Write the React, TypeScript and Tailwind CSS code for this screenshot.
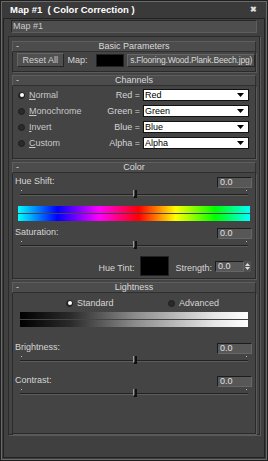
const font = "font-['Liberation_Sans',Arial,sans-serif]";

function Header({ title }: { title: string }) {
  return (
    <div className="h-[11px] shrink-0 flex items-center bg-[#4c4c4c] border border-t-[#5e5e5e] border-l-[#5e5e5e] border-b-[#2f2f2f] border-r-[#2f2f2f] text-[9px] leading-none text-[#dadada] relative">
      <span className="absolute left-[3px] top-[0px]">-</span>
      <span className="flex-1 text-center">{title}</span>
    </div>
  );
}

function Rollout({ title, children, h }: { title: string; children: React.ReactNode; h: string }) {
  return (
    <div className={`flex flex-col shrink-0 ${h}`}>
      <Header title={title} />
      <div className="flex-1 min-h-0 overflow-hidden border-l border-r border-b border-l-[#2a2a2a] border-r-[#2a2a2a] border-b-[#2a2a2a] shadow-[1px_1px_0_#5a5a5a]">{children}</div>
    </div>
  );
}

function Radio({ on, label }: { on?: boolean; label: React.ReactNode }) {
  return (
    <div className="flex items-center gap-[4px]">
      <div className="w-[7px] h-[7px] rounded-full bg-[#2a2a2a] border border-[#1e1e1e] flex items-center justify-center">
        {on && <div className="w-[4px] h-[4px] rounded-full bg-white" />}
      </div>
      <span>{label}</span>
    </div>
  );
}

function Drop({ value }: { value: string }) {
  return (
    <div className="w-[106px] h-[12px] bg-white border border-[#111] flex items-center text-black text-[9px] leading-none pl-[1px]">
      <span className="flex-1">{value}</span>
      <svg width="7" height="4" className="mr-[4px]"><polygon points="0,0 7,0 3.5,4" fill="#000" /></svg>
    </div>
  );
}

function Field({ w = "w-[35px]" }: { w?: string }) {
  return (
    <div className={`${w} h-[11px] bg-[#575757] border-t border-l border-t-[#1c1c1c] border-l-[#1c1c1c] border-b border-r border-b-[#666] border-r-[#666] text-[9px] leading-none text-[#e0e0e0] pl-[2px] flex items-center`}>
      0.0
    </div>
  );
}

function Slider() {
  return (
    <div className="relative h-[12px] mx-[6px]">
      <div className="absolute left-0 right-0 top-[6px] h-[2px] border-t border-t-[#222] border-b border-b-[#5c5c5c]" />
      <div className="absolute left-[1px] top-[2px] w-[1px] h-[1px] bg-[#bbb]" />
      <div className="absolute right-[1px] top-[2px] w-[1px] h-[1px] bg-[#bbb]" />
      <div className="absolute left-[113px] top-[2px] w-[4px] h-[8px] bg-[#4a4a4a] border-r-2 border-b-2 border-r-[#111] border-b-[#111] border-l border-l-[#9a9a9a]" />
    </div>
  );
}

function LabelField({ label }: { label: string }) {
  return (
    <div className="flex items-center justify-between pl-[1px] pr-[2px] h-[12px]">
      <span className="-mt-[1px]">{label}</span>
      <Field />
    </div>
  );
}

const spectrum = "bg-[linear-gradient(to_right,#00ffff,#0000ff_17%,#ff00ff_35%,#ff0000_52%,#ffff00_68%,#00ff00_85%,#00ffff)]";
const grays = "bg-[linear-gradient(to_right,#000,#2a2a2a_22%,#8a8a8a_50%,#e6e6e6_85%,#fff)]";

export default function App() {
  return (
    <div className={`w-[268px] h-[461px] bg-[#1f1f1f] p-[1px] ${font} text-[9px] text-[#d6d6d6] leading-none`}>
      <div className="h-full bg-[#3c3c3c] border border-[#6a6a6a] flex flex-col">
        <div className="h-[16px] shrink-0 flex items-center px-[8px] text-white font-bold text-[9.5px] bg-[#3a3a3a]">
          <span className="flex-1">Map #1&nbsp;&nbsp;( Color Correction )</span>
          <span className="text-[8px] text-[#ddd] mr-[1px]">✖</span>
        </div>
        <div className="flex-1 flex flex-col border border-[#222] mx-[1px] mb-[1px] bg-[#404040] px-[2px]">
          <div className="shrink-0 mt-[1px] mx-[5px] h-[13px] bg-[#4e4e4e] border border-t-[#262626] border-l-[#262626] border-b-[#5e5e5e] border-r-[#5e5e5e] text-[#c8c8c8] pl-[1px] flex items-center">
            Map #1
          </div>
          <div className="mt-[3px] h-[399px] shrink-0 mx-[2px] border border-[#2a2a2a] bg-[#444] px-[3px] pt-[4px] flex flex-col gap-[3px] shadow-[1px_1px_0_#5a5a5a]">
            <Rollout title="Basic Parameters" h="h-[31px]">
              <div className="flex items-center pt-[1px] pl-[4px] gap-[3px] whitespace-nowrap">
                <div className="w-[47px] h-[14px] bg-[#505050] border border-t-[#666] border-l-[#666] border-b-[#262626] border-r-[#262626] flex items-center justify-center text-[#cfcfcf]">Reset All</div>
                <span className="ml-[1px]">Map:</span>
                <div className="ml-[5px] w-[29px] h-[13px] bg-black border border-[#222]" />
                <div className="ml-[0px] w-[129px] h-[13px] bg-[#505050] border border-t-[#666] border-l-[#666] border-b-[#262626] border-r-[#262626] flex items-center justify-center text-[#d8d8d8] text-[8.5px] tracking-[-0.2px] overflow-hidden">s.Flooring.Wood.Plank.Beech.jpg)</div>
              </div>
            </Rollout>
            <Rollout title="Channels" h="h-[84px]">
              <div className="flex pt-[3px] pl-[5px]">
                <div className="flex flex-col gap-[4px] w-[80px] text-[#c8c8c8]">
                  <div className="h-[12px] flex items-center"><Radio on label={<><u>N</u>ormal</>} /></div>
                  <div className="h-[12px] flex items-center"><Radio label={<><u>M</u>onochrome</>} /></div>
                  <div className="h-[12px] flex items-center"><Radio label={<><u>I</u>nvert</>} /></div>
                  <div className="h-[12px] flex items-center"><Radio label={<><u>C</u>ustom</>} /></div>
                </div>
                <div className="flex flex-col gap-[4px] flex-1 items-end pr-[6px]">
                  <div className="flex items-center gap-[3px]"><span>Red =</span><Drop value="Red" /></div>
                  <div className="flex items-center gap-[3px]"><span>Green =</span><Drop value="Green" /></div>
                  <div className="flex items-center gap-[3px]"><span>Blue =</span><Drop value="Blue" /></div>
                  <div className="flex items-center gap-[3px]"><span>Alpha =</span><Drop value="Alpha" /></div>
                </div>
              </div>
            </Rollout>
            <Rollout title="Color" h="h-[117px]">
              <div className="flex flex-col pt-[3px] px-[1px]">
                <LabelField label="Hue Shift:" />
                <Slider />
                <div className={`mx-[4px] mt-[6px] h-[7px] ${spectrum}`} />
                <div className={`mx-[4px] mt-[1px] h-[7px] ${spectrum}`} />
                <div className="mt-[6px]"><LabelField label="Saturation:" /></div>
                <Slider />
                <div className="flex items-center justify-end gap-[6px] mt-[5px] pr-[3px]">
                  <span className="mt-[4px]">Hue Tint:</span>
                  <div className="w-[29px] h-[20px] bg-black border border-[#222]" />
                  <span className="ml-[0px] mt-[4px]">Strength:</span>
                  <div className="flex items-center -ml-[3px]">
                    <Field w="w-[29px]" />
                    <div className="w-[7px] h-[11px] bg-[#505050] flex flex-col items-center justify-center gap-[1px]">
                      <svg width="5" height="3"><polygon points="2.5,0 5,3 0,3" fill="#ddd" /></svg>
                      <svg width="5" height="3"><polygon points="0,0 5,0 2.5,3" fill="#ddd" /></svg>
                    </div>
                  </div>
                </div>
              </div>
            </Rollout>
            <Rollout title="Lightness" h="flex-1">
              <div className="flex flex-col pt-[4px] px-[1px]">
                <div className="flex items-center h-[12px] pl-[52px]">
                  <div className="w-[102px]"><Radio on label="Standard" /></div>
                  <Radio label="Advanced" />
                </div>
                <div className={`mx-[6px] mt-[3px] h-[7px] ${grays}`} />
                <div className={`mx-[6px] mt-[1px] h-[7px] ${grays}`} />
                <div className="mt-[15px]"><LabelField label="Brightness:" /></div>
                <Slider />
                <div className="mt-[9px]"><LabelField label="Contrast:" /></div>
                <Slider />
              </div>
            </Rollout>
          </div>
        </div>
      </div>
    </div>
  );
}
